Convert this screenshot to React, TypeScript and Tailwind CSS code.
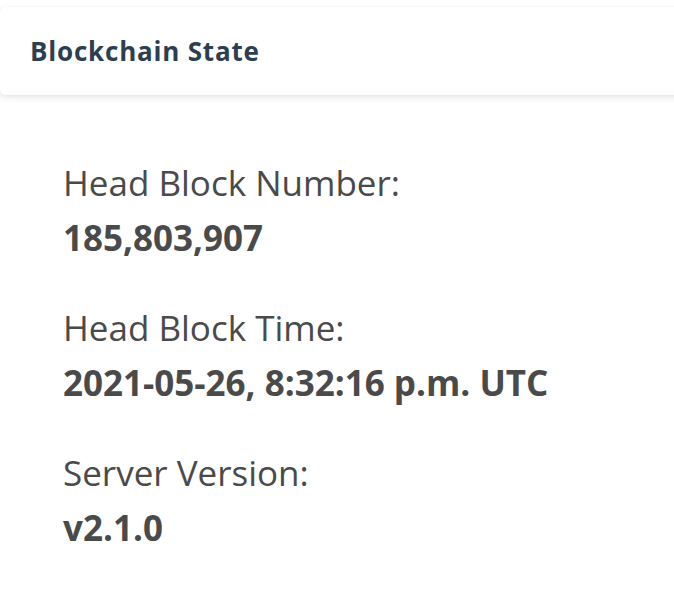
export default function App() {
  const rows = [
    { label: "Head Block Number:", value: "185,803,907" },
    { label: "Head Block Time:", value: "2021-05-26, 8:32:16 p.m. UTC" },
    { label: "Server Version:", value: "v2.1.0" },
  ];
  return (
    <div className="min-h-[614px] w-[674px] overflow-hidden bg-white pt-[7px] font-['Open_Sans',sans-serif]">
      <div className="-mr-4 flex h-[88px] items-center rounded-l-md bg-white pl-[30px] shadow-[0_2px_6px_rgba(0,0,0,0.12)]">
        <h2 className="text-[26px] font-bold tracking-[0.8px] text-[#2c3e50]">Blockchain State</h2>
      </div>
      <div className="flex flex-col gap-[35px] pl-[63px] pt-[60px]">
        {rows.map((r) => (
          <div key={r.label} className="flex flex-col text-[35px] leading-[55px] text-[#4a4a4a]">
            <span>{r.label}</span>
            <span className="font-bold">{r.value}</span>
          </div>
        ))}
      </div>
    </div>
  );
}
